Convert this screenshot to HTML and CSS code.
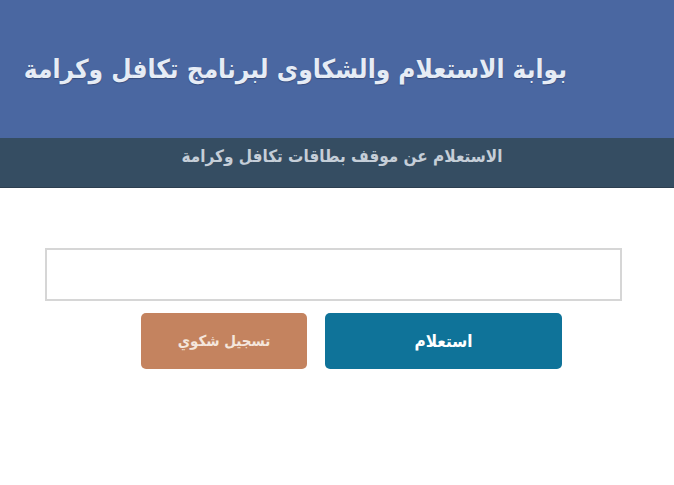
FILE: index.html
```html
<!DOCTYPE html>
<html lang="ar" dir="rtl">
<head>
<meta charset="utf-8">
<link rel="stylesheet" href="styles.css">
</head>
<body>
<header class="top">
  <h1 class="title">بوابة الاستعلام والشكاوى لبرنامج تكافل وكرامة</h1>
</header>
<div class="subbar">
  <h2 class="subtitle">الاستعلام عن موقف بطاقات تكافل وكرامة</h2>
</div>
<main class="content">
  <input class="field" type="text">
  <div class="actions">
    <button class="btn btn-query">استعلام</button>
    <button class="btn btn-complain">تسجيل شكوي</button>
  </div>
</main>
</body>
</html>
```
FILE: styles.css
```css
html, body {
  margin: 0;
  padding: 0;
  background: #ffffff;
  font-family: "DejaVu Sans Condensed", "DejaVu Sans", sans-serif;
}
.top {
  background: #4a67a1;
  height: 138px;
  display: flex;
  align-items: center;
  padding-right: 107px;
  box-sizing: border-box;
}
.title {
  margin: 0;
  color: #e6ecf5;
  font-size: 26px;
  font-weight: bold;
  line-height: 1;
  white-space: nowrap;
  text-shadow: 0 1px 1px rgba(20, 30, 60, 0.35);
}
.subbar {
  background: #354d62;
  height: 50px;
  display: flex;
  align-items: center;
  justify-content: center;
  padding-left: 10px;
  border-bottom: 1px solid #2d3f50;
  box-sizing: border-box;
}
.subtitle {
  margin: 0 0 12px 0;
  color: #c5ced8;
  font-size: 17px;
  font-weight: bold;
  line-height: 1;
}
.content {
  width: 577px;
  margin: 60px 52px 0 0;
}
.field {
  display: block;
  width: 577px;
  height: 53px;
  box-sizing: border-box;
  border: 2px solid #d6d6d6;
  background: #fff;
  margin: 0;
}
.actions {
  display: flex;
  gap: 18px;
  margin-top: 12px;
  padding-right: 60px;
}
.btn {
  height: 56px;
  border: none;
  border-radius: 5px;
  color: #ffffff;
  font-family: "DejaVu Sans Condensed", "DejaVu Sans", sans-serif;
  font-weight: bold;
  font-size: 15px;
  padding: 0;
}
.btn-query {
  width: 237px;
  background: #0f7399;
  font-size: 17px;
}
.btn-complain {
  width: 166px;
  background: #c4835f;
  color: #f4e6dc;
}
```
